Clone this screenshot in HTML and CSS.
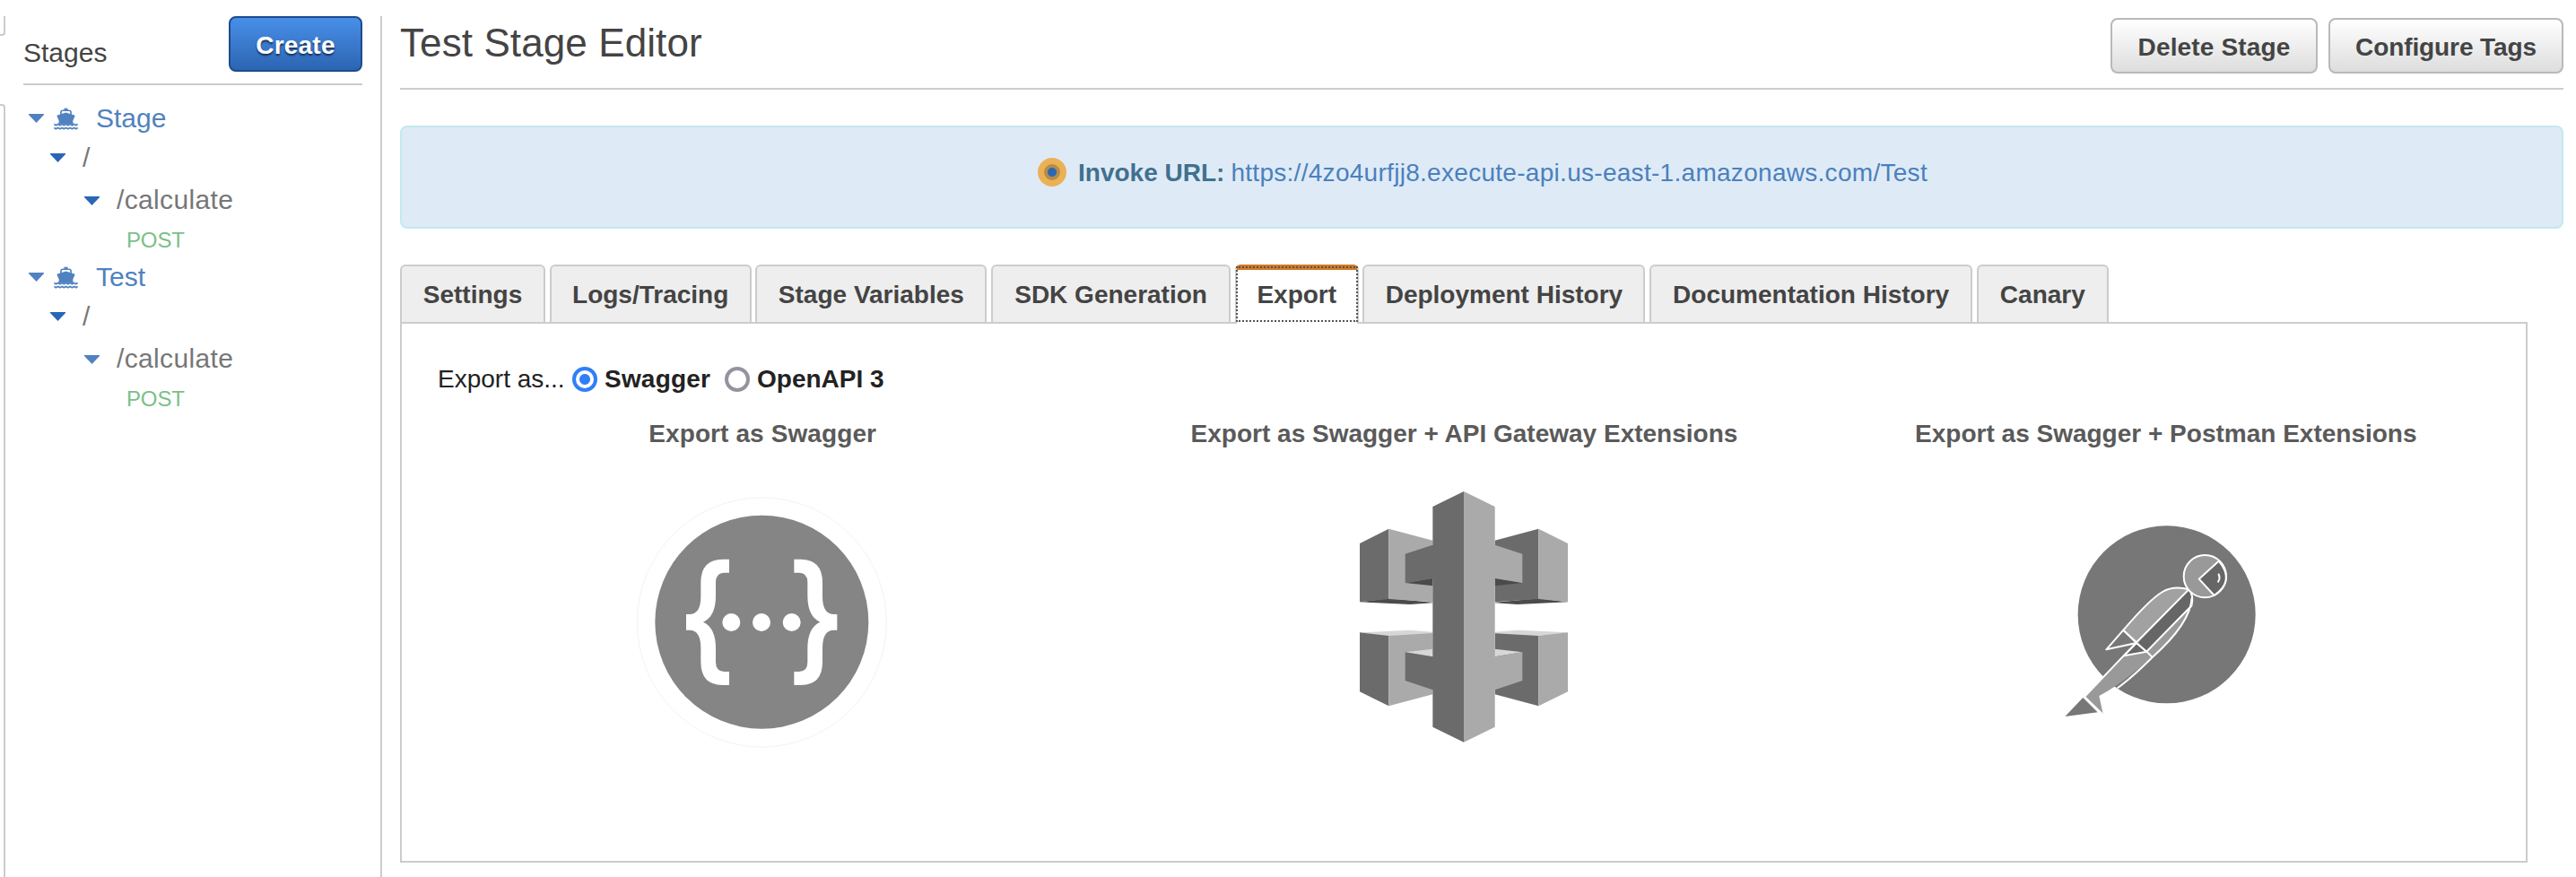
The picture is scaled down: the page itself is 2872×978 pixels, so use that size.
FILE: index.html
```html
<!DOCTYPE html>
<html lang="en">
<head>
<meta charset="utf-8">
<title>Test Stage Editor</title>
<link rel="stylesheet" href="styles.css">
</head>
<body>
<svg class="defs" aria-hidden="true">
  <symbol id="ship" viewBox="180 356 82 76">
    <path d="M215 358h12v7h-12z"/>
    <path d="M204 383v-10q0-7 7-7h20q7 0 7 7v10" fill="none" stroke="currentColor" stroke-width="5"/>
    <path d="M221 373l29 9q2 1 1 4l-6 13q-2 6 2 14l-5 1-7-4-7 4-7-4-7 4-7-4-7 4-5-1q4-8 2-14l-6-13q-1-3 1-4z"/>
    <path d="M181 412l6 4 7-4 7 4 7-4 6 4 7-4 7 4 7-4 7 4 7-4 6 4 6-4M181 424l6 4 7-4 7 4 7-4 6 4 7-4 7 4 7-4 7 4 7-4 6 4 6-4" fill="none" stroke="currentColor" stroke-width="5"/>
  </symbol>
  <symbol id="caret" viewBox="0 0 17 10"><path d="M0 0h17v1L8.500 10 0 1z"/></symbol>
</svg>
<div class="app">
  <div class="rail"><div class="rail-top"></div><div class="rail-box"></div></div>
  <aside class="sidebar">
    <div class="sidebar-head">
      <span class="sidebar-title">Stages</span>
      <button class="btn btn-primary">Create</button>
    </div>
    <ul class="tree">
      <li class="row row-stage"><svg class="caret"><use href="#caret"/></svg><svg class="ship"><use href="#ship"/></svg><span>Stage</span></li>
      <li class="row row-root"><svg class="caret"><use href="#caret"/></svg><span>/</span></li>
      <li class="row row-path"><svg class="caret"><use href="#caret"/></svg><span>/calculate</span></li>
      <li class="row row-method"><span>POST</span></li>
      <li class="row row-stage"><svg class="caret"><use href="#caret"/></svg><svg class="ship"><use href="#ship"/></svg><span>Test</span></li>
      <li class="row row-root"><svg class="caret"><use href="#caret"/></svg><span>/</span></li>
      <li class="row row-path row-hover"><svg class="caret"><use href="#caret"/></svg><span>/calculate</span></li>
      <li class="row row-method"><span>POST</span></li>
    </ul>
  </aside>
  <main class="main">
    <header class="header">
      <h1 class="title">Test Stage Editor</h1>
      <div class="actions">
        <button class="btn btn-delete">Delete Stage</button>
        <button class="btn btn-tags">Configure Tags</button>
      </div>
    </header>
    <div class="banner">
      <svg class="target" viewBox="0 0 32 32"><circle cx="16" cy="16" r="16" fill="#ebb155"/><circle cx="16" cy="16" r="9" fill="#b58c49"/><circle cx="16" cy="16" r="5" fill="#2a66b8"/></svg>
      <strong class="invoke">Invoke URL:</strong>
      <a class="url">https://4zo4urfjj8.execute-api.us-east-1.amazonaws.com/Test</a>
    </div>
    <nav class="tabs">
      <div class="tab tab-settings">Settings</div>
      <div class="tab tab-logs">Logs/Tracing</div>
      <div class="tab tab-vars">Stage Variables</div>
      <div class="tab tab-sdk">SDK Generation</div>
      <div class="tab tab-export tab-active">Export</div>
      <div class="tab tab-deploy">Deployment History</div>
      <div class="tab tab-docs">Documentation History</div>
      <div class="tab tab-canary">Canary</div>
    </nav>
    <section class="panel">
      <div class="formats">
        <span class="formats-label">Export as...</span>
        <span class="radio radio-on"></span><strong class="opt-swagger">Swagger</strong>
        <span class="radio"></span><strong class="opt-openapi">OpenAPI 3</strong>
      </div>
      <div class="exports">
        <div class="export">
          <h2 class="export-title export-title-swagger">Export as Swagger</h2>
          <svg class="logo" viewBox="60 30 900 900">
            <circle cx="508" cy="492" r="417" fill="none" stroke="#f3f3f3" stroke-width="3"/>
            <circle cx="508" cy="491" r="357" fill="#858585"/>
            <g fill="#fff">
              <path id="brace" d="M399 281v45h-17q-28 0-28 32v45q0 70-42 88 42 19 42 88v46q0 32 28 32h17v45h-22q-73 0-73-78v-45q0-61-38-61h-11v-53h11q38 0 38-60v-46q0-78 73-78z"/>
              <use href="#brace" transform="matrix(-1 0 0 1 1015 0)"/>
              <circle cx="406" cy="492" r="30"/><circle cx="507" cy="492" r="30"/><circle cx="608" cy="492" r="30"/>
            </g>
          </svg>
        </div>
        <div class="export">
          <h2 class="export-title">Export as Swagger + API Gateway Extensions</h2>
          <svg class="logo" viewBox="6 30 900 900">
            <g id="gateway-left">
              <path fill="#4b4b4b" d="M108 424l97-12 147 13v2l-75 5z"/>
              <path fill="#d7d7d7" d="M108 526l168-8 76 6v8l-147 8z"/>
            </g>
            <use href="#gateway-left" transform="matrix(-1 0 0 1 912 0)"/>
            <path fill="#6b6b6b" d="M108 228l97-49v235l-97 10zM108 526l97 11v235l-97-48zM560 218l146-39v235l-146 10zM560 529l146 8v235l-146-39z"/>
            <path fill="#aaa" d="M205 179l147 39v206l-147-10zM205 537l147-9v205l-147 39zM706 179l98 49v196l-98-10zM706 537l98-11v198l-98 48z"/>
            <path fill="#4b4b4b" d="M260 360l92-16v26zM652 360l-92-16v26z"/>
            <path fill="#d7d7d7" d="M260 592l92-11v26zM652 592l-92-11v26z"/>
            <path fill="#6b6b6b" d="M260 263l92-30v112l-92 15zM260 592l92 15v111l-92-31zM352 105l104-51v839l-104-51z"/>
            <path fill="#aaa" d="M652 263l-92-30v112l92 15zM652 592l-92 15v111l92-31zM560 105L456 54v839l104-51z"/>
          </svg>
        </div>
        <div class="export">
          <h2 class="export-title">Export as Swagger + Postman Extensions</h2>
          <svg class="logo" viewBox="-45 -60 900 900">
            <circle cx="407" cy="376" r="297" fill="#777"/>
            <path fill="#999" d="M305 470L134 649l60 60-13-61q70-36 178-130z"/>
            <path fill="#777" d="M127 654l49 49-109 14z"/>
            <g stroke="#fff" stroke-width="6" stroke-linejoin="round">
              <path d="M134 649L305 470M242 622Q290 588 359 519" fill="none"/>
              <path d="M134 653l58 56" fill="none"/>
              <path fill="#777" d="M262 428l-57 65 101-22z"/>
              <path fill="#666" d="M306 471l-42 43 76-14z"/>
              <path fill="#a1a1a1" d="M262 428Q350 325 393 300 430 278 481 292L306 469z"/>
              <path fill="#666" d="M481 292q18 20 9 55L340 500l-34-30z"/>
              <path fill="#999" d="M490 347L340 500l19 19Q486 406 491 320"/>
              <circle cx="535" cy="248" r="71" fill="#999"/>
              <path fill="#666" d="M581 197l-66 60 51 55q71-50 15-115z"/>
              <path d="M580 239q8 15-2 29" fill="none"/>
            </g>
          </svg>
        </div>
      </div>
    </section>
  </main>
</div>
</body>
</html>
```
FILE: styles.css
```css
* { box-sizing: border-box; }
body {
  margin: 0;
  height: 978px;
  overflow: hidden;
  background: #fff;
  color: #444;
  font: 28px/40px "Liberation Sans", Arial, sans-serif;
}
h1, h2, ul { margin: 0; padding: 0; font-weight: normal; list-style: none; }
svg { display: block; flex: none; }
.defs { position: absolute; width: 0; height: 0; }
.app { display: flex; height: 978px; padding-top: 18px; white-space: nowrap; }

.rail { display: flex; flex-direction: column; width: 6px; gap: 76px; }
.rail-top { height: 22px; border: solid #ccc; border-width: 0 2px 2px 0; border-bottom-right-radius: 4px; }
.rail-box { flex: 1; border: solid #ccc; border-width: 2px 2px 0 0; border-top-right-radius: 4px; }

.sidebar { width: 420px; padding: 0 20px; border-right: 2px solid #ccc; }
.sidebar-head { display: flex; justify-content: space-between; height: 77px; border-bottom: 2px solid #ccc; }
.sidebar-title { padding-top: 21px; font-size: 30px; }
.btn {
  height: 62px;
  padding: 3px 0 0;
  border: 2px solid #b9b9b9;
  border-radius: 8px;
  background: linear-gradient(#fff, #ddd);
  color: #444;
  font: bold 28px/40px "Liberation Sans", Arial, sans-serif;
}
.btn-primary {
  width: 149px;
  border-color: #1f4b8b;
  background: linear-gradient(#488fe8, #2c65b2);
  color: #fff;
  letter-spacing: .2px;
  text-shadow: 0 2px 2px rgba(0, 0, 0, .6);
}
.btn-delete { width: 231px; letter-spacing: .15px; }
.btn-tags { width: 262px; letter-spacing: -.1px; }

.tree { padding-top: 15px; color: #777; font-size: 30px; }
.row { display: flex; align-items: center; height: 44px; }
.caret { width: 17px; height: 10px; fill: #2a66b8; }
.row-stage { padding-left: 6px; color: #5082c0; }
.row-stage .caret, .row-hover .caret { fill: #5082c0; }
.ship { width: 27px; height: 25px; margin: 0 20px 0 11px; fill: currentColor; }
.row-root { padding-left: 30px; }
.row-root span { margin-left: 19px; }
.row-path { height: 49px; padding-left: 68px; }
.row-path .caret { margin-top: 3px; }
.row-path span { margin-left: 19px; letter-spacing: .35px; }
.row-method { height: 40px; padding: 2px 0 0 115px; color: #7bbf87; font-size: 24px; letter-spacing: -.15px; }

.main { flex: 1; padding: 0 14px 0 20px; }
.header { display: flex; justify-content: space-between; height: 82px; border-bottom: 2px solid #ccc; }
.title { font-size: 44px; line-height: 60px; letter-spacing: .1px; }
.actions { display: flex; gap: 12px; padding-top: 2px; }
.banner {
  display: flex;
  justify-content: center;
  height: 115px;
  margin-top: 40px;
  padding: 31px 0 0 2px;
  border: 2px solid #c3e8f0;
  border-radius: 8px;
  background: #deebf6;
  color: #41708f;
}
.target { width: 32px; height: 32px; margin: 3px 13px 0 0; }
.invoke { margin-right: 7px; }
.url { color: #4b80bd; letter-spacing: .29px; }

.tabs { display: flex; gap: 4.700px; height: 64px; margin-top: 40px; }
.tab {
  height: 64px;
  padding-top: 12px;
  border: 2px solid #ccc;
  border-bottom: 0;
  border-radius: 6px 6px 0 0;
  background: #eee;
  font-weight: bold;
  text-align: center;
}
.tab-settings { width: 162px; }
.tab-logs { width: 225px; }
.tab-vars { width: 258px; }
.tab-sdk { width: 267px; }
.tab-export { width: 138px; }
.tab-deploy { width: 315px; }
.tab-docs { width: 360px; }
.tab-canary { width: 147px; }
.tab-active {
  position: relative;
  height: 66px;
  padding-top: 8px;
  border-top: 6px solid #d17a24;
  background: #fff;
}
.tab-active::after {
  content: "";
  position: absolute;
  inset: -4px -1px 2px -1px;
  border: 2px dotted #555;
}

.panel { width: 2372px; height: 603px; padding: 42px 10px 0 11px; border: 2px solid #ccc; }
.formats { display: flex; align-items: center; height: 40px; padding-left: 29px; color: #222; }
.formats-label { width: 150px; }
.radio { width: 28px; height: 28px; margin-right: 8px; border: 4px solid #9494a0; border-radius: 50%; }
.radio-on { border-color: #317ff8; background: radial-gradient(circle, #317ff8 5.500px, #fff 6.500px); }
.opt-swagger { width: 134px; letter-spacing: .2px; }
.exports { display: grid; grid-template-columns: repeat(3, 1fr); margin-top: 21px; }
.export { display: flex; flex-direction: column; align-items: center; }
.export-title { color: #5a5a5a; font-size: 28px; font-weight: bold; }
.export-title-swagger { letter-spacing: .1px; }
.logo { width: 300px; height: 300px; margin-top: 36px; }
```
